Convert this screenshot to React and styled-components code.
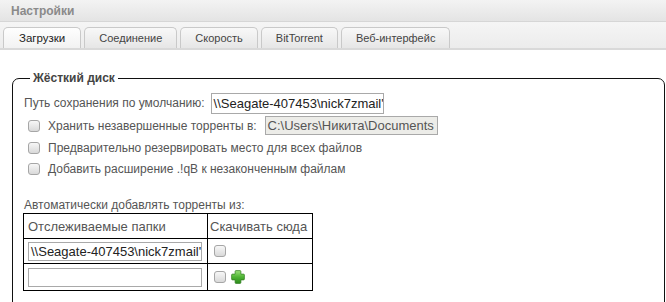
import React from 'react';
import styled, { createGlobalStyle } from 'styled-components';

const GlobalStyle = createGlobalStyle`
	html, body {
		margin: 0;
		padding: 0;
		background: #fff;
	}
	body {
		width: 666px;
		height: 302px;
		overflow: hidden;
		font-family: "Liberation Sans", Arial, sans-serif;
		font-size: 12px;
		color: #555;
	}
`;

const TitleBar = styled.div`
	height: 21px;
	padding-left: 11px;
	display: flex;
	align-items: center;
	border-bottom: 1px solid #d6d6d6;
	background: linear-gradient(#f3f3f3, #e4e4e4);
	font-weight: bold;
	color: #8a8a8a;
`;

const TabStrip = styled.div`
	height: 26px;
	padding-left: 3px;
	display: flex;
	align-items: flex-end;
	gap: 3px;
	background: linear-gradient(#f5f5f5, #ececec);
	border-bottom: 2px solid #d9d9d9;
`;

const Tab = styled.div`
	height: 20px;
	padding: 0 ${p => (p.$active ? 15 : 14)}px;
	display: flex;
	align-items: center;
	border: 1px solid #c9c9c9;
	border-bottom: none;
	border-radius: 5px 5px 0 0;
	background: ${p => (p.$active ? 'linear-gradient(#fefefe, #f2f2f2)' : 'linear-gradient(#f8f8f8, #e6e6e6)')};
	color: ${p => (p.$active ? '#222' : '#444')};
	font-size: ${p => (p.$active ? 11.5 : 11)}px;
`;

const Box = styled.fieldset`
	margin: 21px 1px 0 12px;
	padding: 7px 10px 20px 10px;
	border: 1px solid #111;
	border-radius: 7px;
	min-width: 0;
`;

const Legend = styled.legend`
	margin-left: 7px;
	padding: 0 3px;
	font-weight: bold;
	line-height: 14px;
	color: #444;
`;

const Row = styled.div`
	display: flex;
	align-items: center;
	height: ${p => p.$h || 21}px;
	padding-left: ${p => (p.$check ? 5 : 1)}px;
	gap: ${p => (p.$check ? 8 : 6)}px;
`;

const Field = styled.div`
	width: ${p => p.$w || 173}px;
	height: ${p => p.$h || 19}px;
	box-sizing: border-box;
	padding: 0 2px;
	display: flex;
	align-items: center;
	overflow: hidden;
	white-space: nowrap;
	border: 1px solid #a9a9a9;
	background: ${p => (p.$disabled ? '#ecece8' : '#fff')};
	color: ${p => (p.$disabled ? '#555' : '#222')};
	font-size: 13px;
`;

const Check = styled.span`
	width: 12px;
	height: 12px;
	box-sizing: border-box;
	flex: none;
	border: 1px solid #a6a6a6;
	border-radius: 3px;
	background: linear-gradient(#f7f7f7, #d9d9d9);
`;

const Caption = styled.div`
	margin-top: 19px;
	padding-left: 1px;
	line-height: 14px;
`;

const Table = styled.table`
	margin-top: 1px;
	border-collapse: collapse;
	border: 1px solid #000;
	font-size: 13px;
	color: #555;
`;

const Head = styled.th`
	width: ${p => p.$w}px;
	height: 24px;
	padding: 0 ${p => p.$pad}px;
	text-align: left;
	font-weight: normal;
	white-space: nowrap;
	border: 1px solid #000;
`;

const Cell = styled.td`
	height: ${p => p.$h || 24}px;
	padding: 0 ${p => p.$pad}px;
	border: 1px solid #000;
`;

const CellRow = styled.div`
	display: flex;
	align-items: center;
	gap: 5px;
	padding-left: 4px;
`;

const PlusIcon = () => (
	<svg width="14" height="14" viewBox="0 0 14 14">
		<defs>
			<linearGradient id="plusG" x1="0" y1="0" x2="0" y2="1">
				<stop offset="0" stopColor="#9be07a" />
				<stop offset="0.5" stopColor="#4fb534" />
				<stop offset="1" stopColor="#2c8a1c" />
			</linearGradient>
		</defs>
		<path
			d="M5 0.6h4a0.9 0.9 0 0 1 0.9 0.9V4.1h2.6a0.9 0.9 0 0 1 0.9 0.9v4a0.9 0.9 0 0 1-0.9 0.9H9.9v2.6a0.9 0.9 0 0 1-0.9 0.9H5a0.9 0.9 0 0 1-0.9-0.9V9.9H1.5a0.9 0.9 0 0 1-0.9-0.9V5a0.9 0.9 0 0 1 0.9-0.9h2.6V1.5A0.9 0.9 0 0 1 5 0.6z"
			fill="url(#plusG)"
			stroke="#2f7d20"
			strokeWidth="0.7"
		/>
	</svg>
);

const tabs = ['Загрузки', 'Соединение', 'Скорость', 'BitTorrent', 'Веб-интерфейс'];

const checks = [
	'Предварительно резервировать место для всех файлов',
	'Добавить расширение .!qB к незаконченным файлам'
];

export default function App() {
	return (
		<>
			<GlobalStyle />
			<TitleBar>Настройки</TitleBar>
			<TabStrip>
				{tabs.map((t, i) => (
					<Tab key={t} $active={i === 0}>{t}</Tab>
				))}
			</TabStrip>
			<Box>
				<Legend>Жёсткий диск</Legend>
				<Row $h={22}>
					<span>Путь сохранения по умолчанию:</span>
					<Field $h={21}>\\Seagate-407453\nick7zmail'</Field>
				</Row>
				<Row $check $h={23}>
					<Check />
					<span>Хранить незавершенные торренты в:</span>
					<Field $disabled>C:\Users\Никита\Documents</Field>
				</Row>
				{checks.map(c => (
					<Row key={c} $check>
						<Check />
						<span>{c}</span>
					</Row>
				))}
				<Caption>Автоматически добавлять торренты из:</Caption>
				<Table>
					<thead>
						<tr>
							<Head $w={175} $pad={4}>Отслеживаемые папки</Head>
							<Head $w={100} $pad={2}>Скачивать сюда</Head>
						</tr>
					</thead>
					<tbody>
						<tr>
							<Cell $pad={4}><Field $w={174}>\\Seagate-407453\nick7zmail'</Field></Cell>
							<Cell $pad={2}><CellRow><Check /></CellRow></Cell>
						</tr>
						<tr>
							<Cell $h={26} $pad={4}><Field $w={174} /></Cell>
							<Cell $h={26} $pad={2}><CellRow><Check /><PlusIcon /></CellRow></Cell>
						</tr>
					</tbody>
				</Table>
			</Box>
		</>
	);
}
